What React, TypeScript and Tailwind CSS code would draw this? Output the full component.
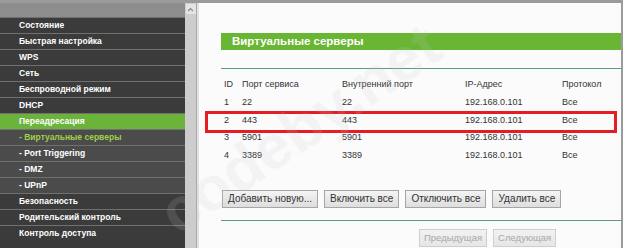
import React from "react";

type NavItem = { label: string; sub?: boolean; active?: boolean; current?: boolean };

const NAV: NavItem[] = [
  { label: "Состояние" },
  { label: "Быстрая настройка" },
  { label: "WPS" },
  { label: "Сеть" },
  { label: "Беспроводной режим" },
  { label: "DHCP" },
  { label: "Переадресация", active: true },
  { label: "- Виртуальные серверы", sub: true, current: true },
  { label: "- Port Triggering", sub: true },
  { label: "- DMZ", sub: true },
  { label: "- UPnP", sub: true },
  { label: "Безопасность" },
  { label: "Родительский контроль" },
  { label: "Контроль доступа" },
];

const ROWS = [
  { id: "1", port: "22", inner: "22", ip: "192.168.0.101", proto: "Все" },
  { id: "2", port: "443", inner: "443", ip: "192.168.0.101", proto: "Все" },
  { id: "3", port: "5901", inner: "5901", ip: "192.168.0.101", proto: "Все" },
  { id: "4", port: "3389", inner: "3389", ip: "192.168.0.101", proto: "Все" },
];

const cols = "grid grid-cols-[18px_100px_123px_97px_1fr] items-center";

function Btn({ children, disabled }: { children: React.ReactNode; disabled?: boolean }) {
  return (
    <button
      type="button"
      className={`h-[18px] border leading-none bg-gradient-to-b ${
        disabled
          ? "px-[4px] text-[9.5px] border-[#cfcfcf] from-[#f2f2f2] to-[#e6e6e6] text-[#a8a8a8]"
          : "px-[5px] text-[10px] border-[#a6a6a6] from-[#f4f4f4] to-[#dedede] text-[#333]"
      }`}
    >
      {children}
    </button>
  );
}

export default function App() {
  return (
    <div
      className="relative w-[623px] h-[248px] overflow-hidden flex border-t-[3px] border-[#9b9b9b] bg-white"
      style={{ fontFamily: '"Liberation Sans", Arial, sans-serif' }}
    >
      {/* sidebar */}
      <div className="w-[185px] shrink-0 flex flex-col bg-[#3a3a3a]">
        <div className="h-[14px] bg-[#8d8d8d]" />
        {NAV.map((n) => (
          <div
            key={n.label}
            className={`h-[16px] shrink-0 flex items-center pl-[19px] border-t border-[#707070] text-[8.5px] font-bold ${
              n.active ? "bg-[#6cb33c]" : n.sub ? "bg-[#4b4b4b]" : "bg-[#3b3b3b]"
            } ${n.current ? "text-[#9fd14a]" : "text-white"}`}
          >
            {n.label}
          </div>
        ))}
      </div>

      {/* scrollbar */}
      <div className="w-[11px] shrink-0 bg-[#cdcdcd] flex flex-col items-center">
        <div className="mt-[1px] w-[10px] h-[10px] bg-[#e4e4e4] flex items-center justify-center">
          <svg width="7" height="5" viewBox="0 0 7 5">
            <path d="M1 4 L3.5 1.5 L6 4" fill="none" stroke="#8a8a8a" strokeWidth="1.2" />
          </svg>
        </div>
      </div>
      <div className="w-[1px] shrink-0 bg-[#a9a9a9]" />
      <div className="w-[2px] shrink-0 bg-[#e2e2e2]" />

      {/* content */}
      <div className="flex-1 bg-[#fbfbfb] border-r-2 border-[#9b9b9b] pl-[22px] pt-[30px] text-[9px] text-[#333]">
        <div className="h-[17px] bg-[#69b634] flex items-center pl-[11px] text-white font-bold text-[11.5px]">
          Виртуальные серверы
        </div>
        <div className="mt-[18px] h-[1px] bg-[#5a9e78]" />

        <div className="mt-[7px] pl-[3px]">
          <div className={`${cols} h-[18px]`}>
            <span>ID</span>
            <span>Порт сервиса</span>
            <span>Внутренний порт</span>
            <span>IP-Адрес</span>
            <span>Протокол</span>
          </div>
          {ROWS.map((r) => (
            <div key={r.id} className={`${cols} h-[17.7px]`}>
              <span>{r.id}</span>
              <span>{r.port}</span>
              <span>{r.inner}</span>
              <span>{r.ip}</span>
              <span>{r.proto}</span>
            </div>
          ))}
        </div>

        <div className="mt-[25px] flex gap-[6px] pl-[1px]">
          <Btn>Добавить новую...</Btn>
          <Btn>Включить все</Btn>
          <Btn>Отключить все</Btn>
          <Btn>Удалить все</Btn>
        </div>

        <div className="mt-[12px] h-[1px] bg-[#5a9e78]" />

        <div className="mt-[8px] flex gap-[6px] pl-[198px]">
          <Btn disabled>Предыдущая</Btn>
          <Btn disabled>Следующая</Btn>
        </div>
      </div>

      {/* red highlight box */}
      <div className="absolute left-[205px] top-[108px] w-[412px] h-[22px] border-[3px] border-[#e51c24]" />

      {/* watermark */}
      <div className="pointer-events-none absolute left-[130px] top-[95px] w-[340px] text-center rotate-[-34deg] text-[62px] font-bold leading-none text-[#c8c8c8]/15 select-none">
        codeby.net
      </div>
    </div>
  );
}
